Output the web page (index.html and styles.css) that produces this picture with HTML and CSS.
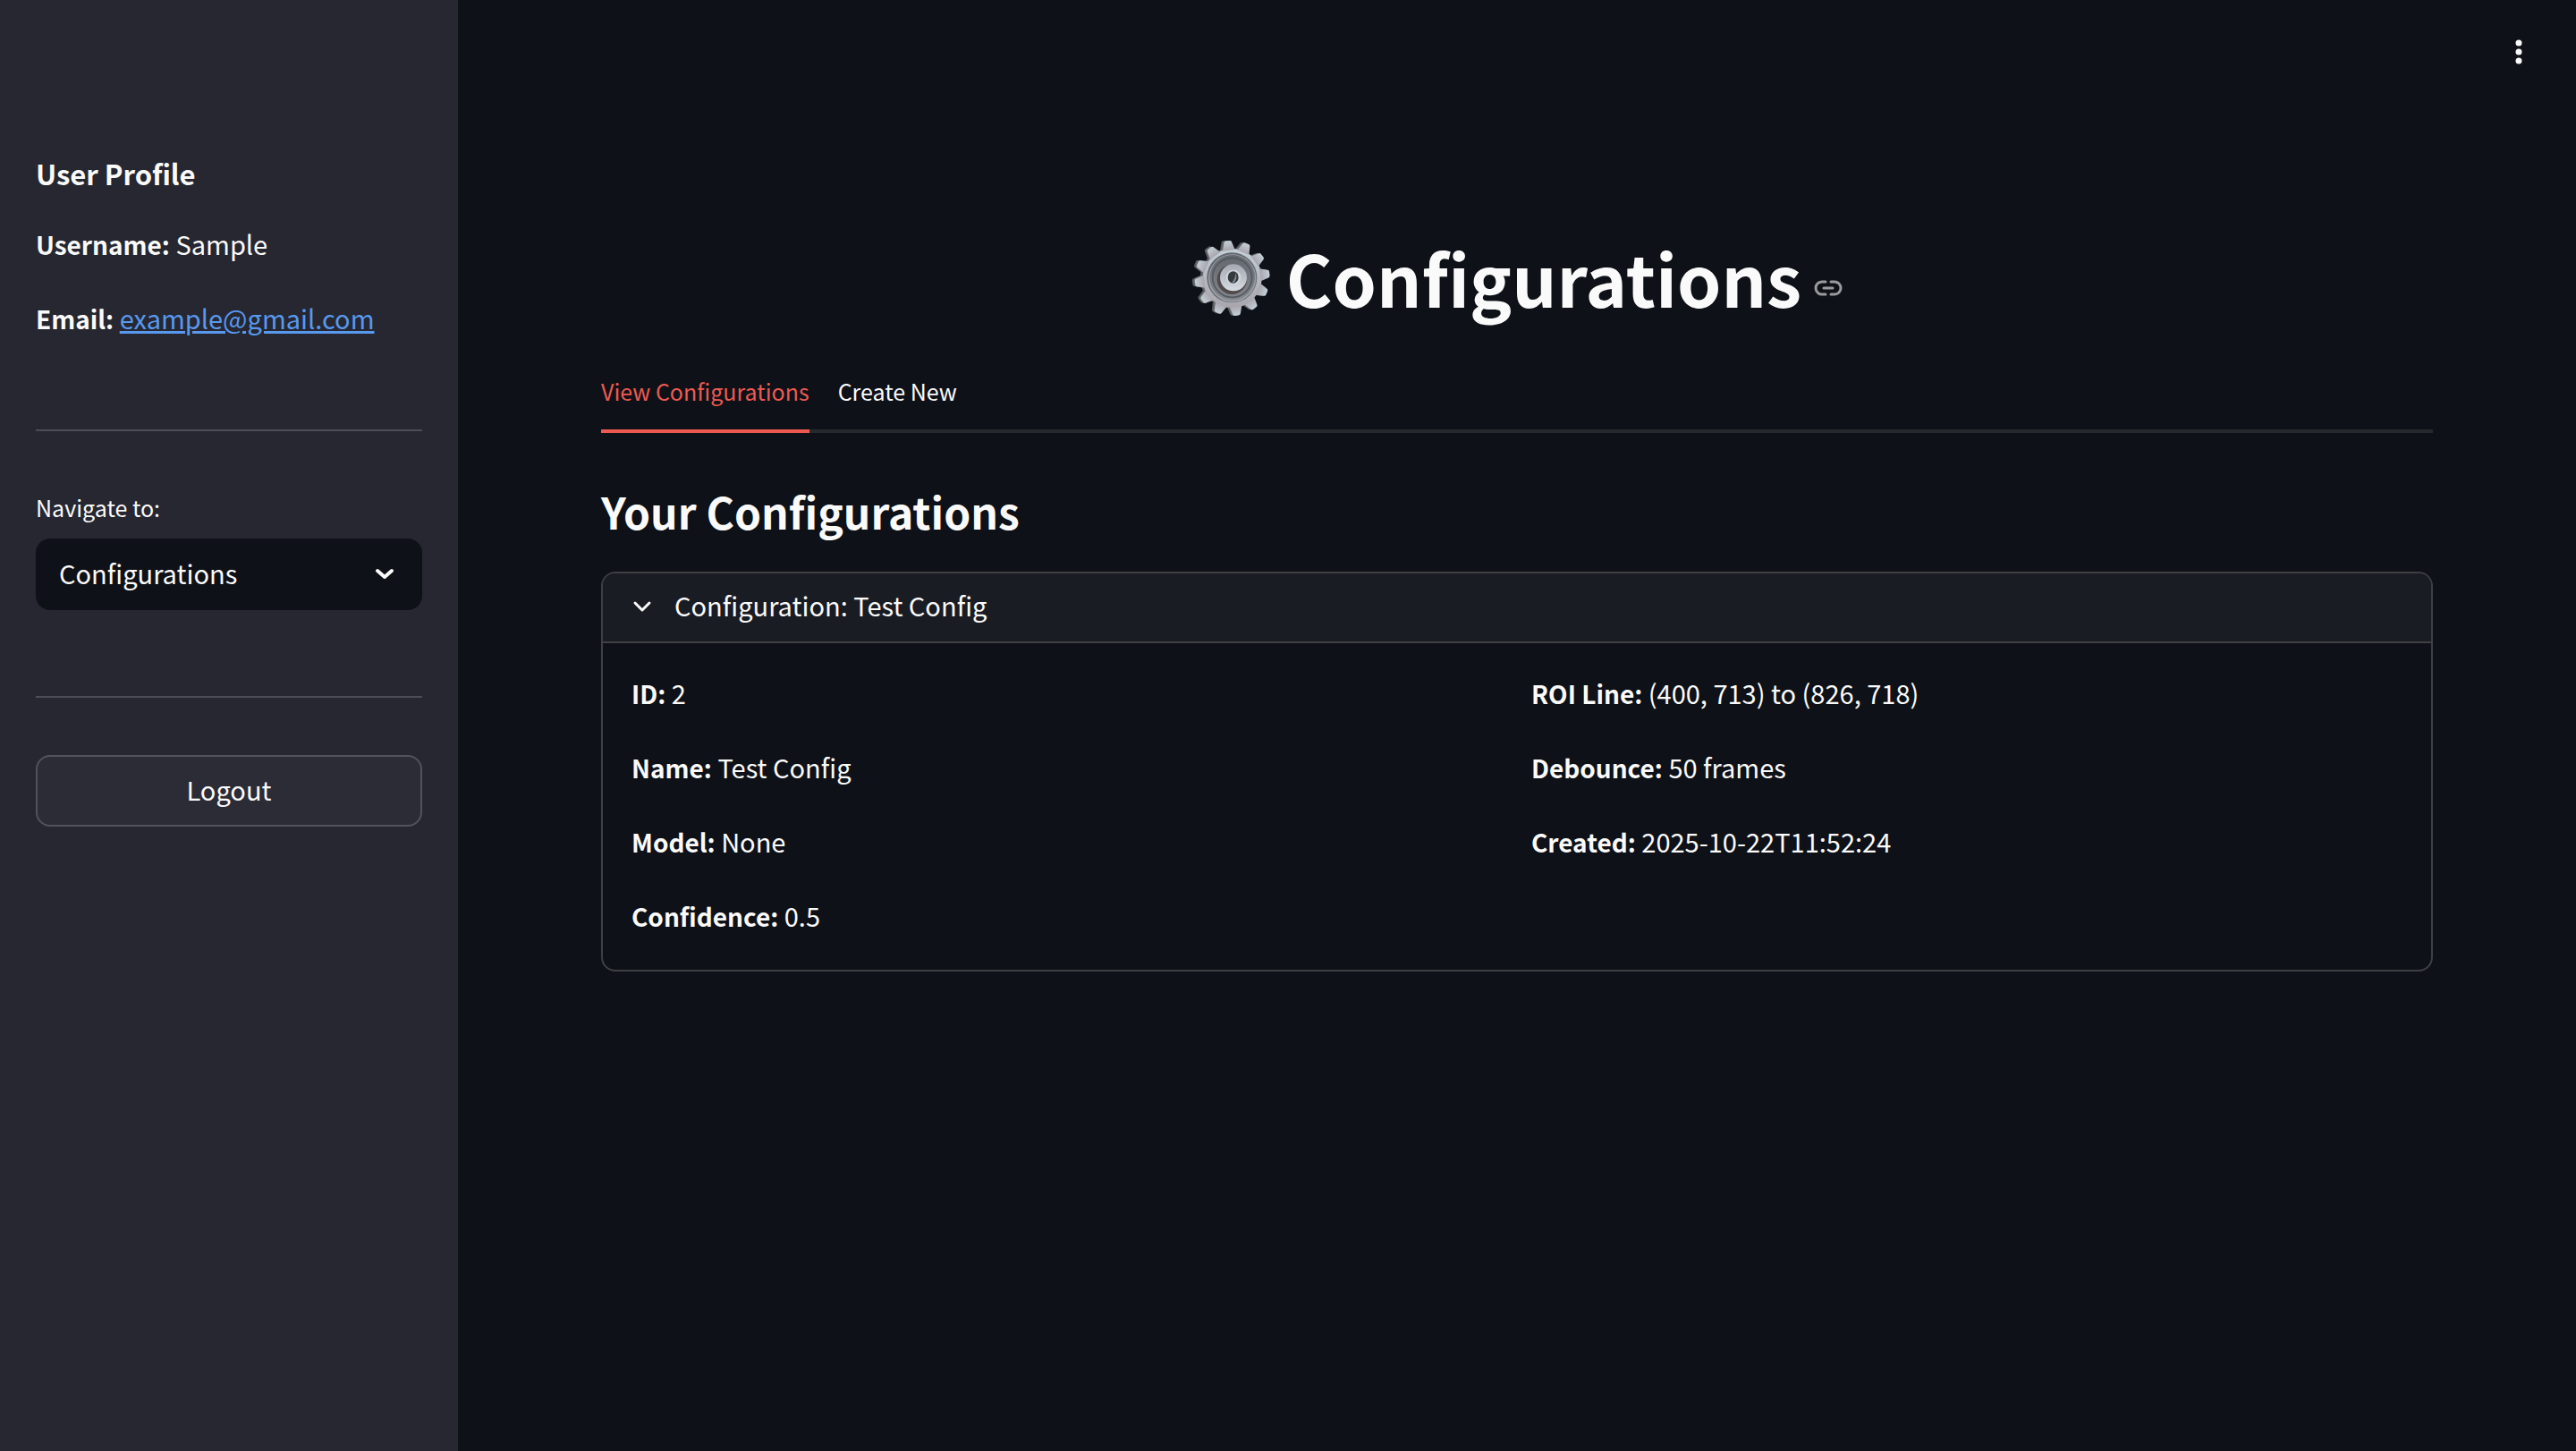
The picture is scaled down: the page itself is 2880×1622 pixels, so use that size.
FILE: index.html
```html
<!DOCTYPE html>
<html lang="en">
<head>
<meta charset="utf-8">
<meta name="viewport" content="width=device-width, initial-scale=1">
<title>Configurations</title>
<link rel="stylesheet" href="styles.css">
</head>
<body>
<div class="app">
  <aside class="sidebar">
    <section class="profile">
      <h3 class="profile-title">User Profile</h3>
      <p><strong>Username:</strong> Sample</p>
      <p><strong>Email:</strong> <a href="mailto:example@gmail.com">example@gmail.com</a></p>
    </section>
    <hr class="rule">
    <div class="field">
      <label class="field-label" for="page">Navigate to:</label>
      <div class="select-wrap">
        <select class="select" id="page">
          <option>Configurations</option>
        </select>
        <svg class="select-arrow" viewBox="0 0 24 16" width="24" height="16" aria-hidden="true"><path d="M4 4l8 7 8-7" fill="none" stroke="#fafafa" stroke-width="4" stroke-linecap="round" stroke-linejoin="round"/></svg>
      </div>
    </div>
    <hr class="rule">
    <button class="logout" type="button">Logout</button>
  </aside>

  <main class="main">
    <header class="toolbar">
      <button class="menu-button" type="button" aria-label="Main menu">
        <svg viewBox="0 0 32 32" width="32" height="32" fill="#fafafa"><circle cx="16" cy="6" r="3.5"/><circle cx="16" cy="16" r="3.5"/><circle cx="16" cy="26" r="3.5"/></svg>
      </button>
    </header>

    <div class="content">
      <div class="title-row">
        <svg class="gear" viewBox="36 33 264 264" width="88" height="88" aria-hidden="true">
          <defs>
            <linearGradient id="face" x1="0" y1="0" x2="0" y2="1"><stop offset="0" stop-color="#c3cfd7"/><stop offset="1" stop-color="#a9a5ad"/></linearGradient>
            <linearGradient id="dish" x1="0" y1="0" x2="0" y2="1"><stop offset="0" stop-color="#63686e"/><stop offset="1" stop-color="#85878d"/></linearGradient>
            <linearGradient id="hub" x1="0" y1="0" x2="0" y2="1"><stop offset="0" stop-color="#a6aab2"/><stop offset=".5" stop-color="#bcc0c8"/><stop offset="1" stop-color="#d8dde2"/></linearGradient>
            <path id="tooth" d="M-21-94L-13-121Q-12-126-6-126H6Q12-126 13-121L21-94Z"/>
            <g id="cog">
              <circle r="99"/>
              <use href="#tooth" transform="rotate(-7)"/><use href="#tooth" transform="rotate(23)"/><use href="#tooth" transform="rotate(53)"/><use href="#tooth" transform="rotate(83)"/><use href="#tooth" transform="rotate(113)"/><use href="#tooth" transform="rotate(143)"/><use href="#tooth" transform="rotate(173)"/><use href="#tooth" transform="rotate(203)"/><use href="#tooth" transform="rotate(233)"/><use href="#tooth" transform="rotate(263)"/><use href="#tooth" transform="rotate(293)"/><use href="#tooth" transform="rotate(323)"/>
            </g>
          </defs>
          <use href="#cog" transform="translate(164 167)" fill="#50585d"/>
          <use href="#cog" transform="translate(168 168)" fill="#696a6a"/>
          <use href="#cog" transform="translate(173 168)" fill="url(#face)"/>
          <circle cx="172" cy="166" r="84" fill="#62676e"/>
          <circle cx="173" cy="168" r="80" fill="#9b9fa6"/>
          <circle cx="173" cy="166" r="76" fill="url(#dish)"/>
          <circle cx="173" cy="166" r="66" fill="none" stroke="#54595f" stroke-width="5"/>
          <circle cx="172" cy="172" r="50" fill="#50494c"/>
          <circle cx="177" cy="166" r="45" fill="url(#hub)"/>
          <circle cx="177" cy="165" r="25" fill="#d1d6dc"/>
          <ellipse cx="176" cy="165" rx="18" ry="20" fill="#353a3f"/>
          <path d="M184 150q8 14-2 30-5 5-10 2 12-14 12-32z" fill="#7e8790"/>
        </svg>
        <h1 class="title" id="configurations">Configurations</h1>
        <a class="anchor" href="#configurations" aria-label="Link to heading">
          <svg viewBox="0 0 32 18" width="32" height="18" fill="none" stroke="#9a9b9d" stroke-width="3" stroke-linecap="round"><path d="M13 2H9a7 7 0 0 0 0 14h4M19 2h4a7 7 0 0 1 0 14h-4M11 9h10"/></svg>
        </a>
      </div>

      <div class="tabs" role="tablist">
        <button class="tab tab-active" type="button" role="tab" aria-selected="true">View Configurations</button>
        <button class="tab" type="button" role="tab" aria-selected="false">Create New</button>
      </div>

      <h2 class="section-title">Your Configurations</h2>

      <details class="card" open>
        <summary class="card-head">
          <svg viewBox="0 0 24 20" width="24" height="20" aria-hidden="true"><path d="M4 7l8 8 8-8" fill="none" stroke="#fafafa" stroke-width="3" stroke-linecap="round" stroke-linejoin="round"/></svg>
          <span>Configuration: Test Config</span>
        </summary>
        <div class="card-body">
          <div class="column">
            <p><strong>ID:</strong> 2</p>
            <p><strong>Name:</strong> Test Config</p>
            <p><strong>Model:</strong> None</p>
            <p><strong>Confidence:</strong> 0.5</p>
          </div>
          <div class="column">
            <p><strong>ROI Line:</strong> (400, 713) to (826, 718)</p>
            <p><strong>Debounce:</strong> 50 frames</p>
            <p><strong>Created:</strong> 2025-10-22T11:52:24</p>
          </div>
        </div>
      </details>
    </div>
  </main>
</div>
</body>
</html>
```

FILE: styles.css
```css
* { box-sizing: border-box; }

body {
  margin: 0;
  background: #0e1117;
  color: #fafafa;
  font-family: "Source Sans Pro", "Noto Sans CJK SC", "Noto Sans", sans-serif;
  font-size: 29px;
  line-height: 51px;
}

h1, h2, h3, p { margin: 0; }
button, select { font: inherit; color: inherit; }
svg { display: block; }
strong { font-size: 28px; line-height: 40px; font-weight: 700; }

.app { display: flex; min-height: 100vh; }

.sidebar {
  flex: 0 0 512px;
  padding: 172px 40px 40px;
  background: #262730;
}

.profile {
  display: flex;
  flex-direction: column;
  gap: 32px;
  padding-bottom: 3px;
}

.profile-title { font-size: 31px; line-height: 43px; font-weight: 700; }
.profile a {
  color: #5899ee;
  text-decoration-thickness: 3px;
  text-underline-offset: 2px;
}

.rule {
  height: 2px;
  margin: 96px 0 64px;
  border: 0;
  background: #4c4d55;
}

.field { display: flex; flex-direction: column; gap: 14px; }
.field-label { font-size: 25px; line-height: 42px; }

.select-wrap { position: relative; }
.select {
  display: block;
  width: 100%;
  height: 80px;
  padding: 0 80px 4px 26px;
  border: 0;
  border-radius: 16px;
  background: #0e1117;
  appearance: none;
}
.select-arrow { position: absolute; top: 32px; right: 30px; pointer-events: none; }

.logout {
  display: block;
  width: 100%;
  height: 80px;
  padding: 0 0 4px;
  border: 2px solid #52535b;
  border-radius: 16px;
  background: #2b2c36;
}

.main { flex: 1; min-width: 0; }

.toolbar {
  display: flex;
  justify-content: flex-end;
  align-items: center;
  height: 116px;
  padding-right: 48px;
}
.menu-button { padding: 0; border: 0; background: none; }

.content { padding: 141px 160px 80px; }

.title-row {
  display: flex;
  justify-content: center;
  align-items: center;
  margin-bottom: 54px;
}
.title { margin: 0 14px 0 18px; font-size: 79px; line-height: 106px; font-weight: 700; }
.anchor { padding-top: 24px; }

.tabs {
  display: flex;
  gap: 32px;
  margin-bottom: 52px;
  box-shadow: inset 0 -4px #26292e;
}
.tab {
  padding: 0 0 23px;
  border: 0;
  border-bottom: 4px solid transparent;
  background: none;
  font-size: 25px;
  line-height: 40px;
}
.tab-active { color: #ec5a52; border-color: #ec5a52; }

.section-title { margin-bottom: 33px; font-size: 48px; line-height: 70px; font-weight: 700; }

.card { border: 2px solid #3e4044; border-radius: 16px; overflow: hidden; }
.card-head {
  display: flex;
  align-items: center;
  gap: 24px;
  padding: 10px 32px 15px;
  background: #1a1c24;
  list-style: none;
}
.card-body {
  display: grid;
  grid-template-columns: 1fr 1fr;
  gap: 32px;
  padding: 30px 32px 35px;
  border-top: 2px solid #3e4044;
}
.column { display: flex; flex-direction: column; gap: 32px; }
```
